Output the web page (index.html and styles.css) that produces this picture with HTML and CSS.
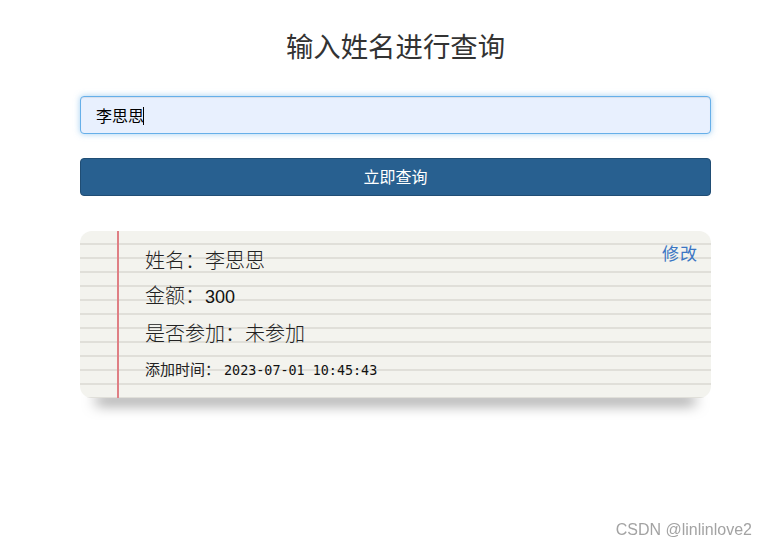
FILE: index.html
```html
<!DOCTYPE html>
<html lang="zh-CN">
<head>
<meta charset="utf-8">
<title>输入姓名进行查询</title>
<link rel="stylesheet" href="styles.css">
</head>
<body>
<main class="page">
  <h1 class="title">输入姓名进行查询</h1>
  <div class="input-wrap">
    <input class="name-input" type="text" value="李思思">
    <span class="caret"></span>
  </div>
  <button class="query-btn" type="button">立即查询</button>
  <section class="note">
    <div class="row row-first">
      <span class="field">姓名：<span class="value">李思思</span></span>
      <a class="edit" href="#">修改</a>
    </div>
    <div class="row"><span class="field">金额：<span class="value num">300</span></span></div>
    <div class="row"><span class="field">是否参加：<span class="value">未参加</span></span></div>
    <div class="row row-time"><span class="time-label">添加时间：</span><span class="time">2023-07-01 10:45:43</span></div>
  </section>
</main>
<div class="watermark">CSDN @linlinlove2</div>
</body>
</html>
```
FILE: styles.css
```css
html, body {
  margin: 0;
  padding: 0;
}
html {
  background: #fff;
}
body {
  font-family: "Noto Sans CJK SC", "Liberation Sans", sans-serif;
  color: #333;
  width: 767px;
  height: 547px;
  overflow: hidden;
}
.page {
  width: 631px;
  margin-left: 80px;
  padding-top: 25px;
  display: flex;
  flex-direction: column;
}
.title {
  margin: 0;
  font-size: 27.4px;
  line-height: 40px;
  font-weight: normal;
  text-align: center;
  color: #333;
}
.input-wrap {
  position: relative;
  margin-top: 31px;
}
.name-input {
  display: block;
  box-sizing: border-box;
  margin: 0;
  width: 631px;
  height: 38px;
  padding: 0 15px;
  border: 1px solid #66afe9;
  border-radius: 4px;
  background: #e8f0fe;
  box-shadow: inset 0 1px 1px rgba(0,0,0,.075), 0 0 6px rgba(102,175,233,.6);
  font-family: "Noto Sans CJK SC", sans-serif;
  font-size: 16px;
  color: #000;
  outline: none;
}
.caret {
  position: absolute;
  left: 63px;
  top: 11px;
  width: 1px;
  height: 18px;
  background: #000;
}
.query-btn {
  box-sizing: border-box;
  margin-top: 24px;
  width: 631px;
  height: 38px;
  border: 1px solid #204d74;
  border-radius: 4px;
  background: #286090;
  color: #fff;
  font-family: "Noto Sans CJK SC", sans-serif;
  font-size: 16px;
  line-height: 20px;
  padding: 0 0 3px;
}
.note {
  position: relative;
  box-sizing: border-box;
  margin-top: 35px;
  height: 167px;
  padding: 11px 13px 0 65px;
  border-radius: 12px;
  background-color: #f3f3ee;
  background-image:
    linear-gradient(to right, transparent 37.5px, #df7f84 37.5px, #df7f84 39px, transparent 39px),
    repeating-linear-gradient(to bottom, transparent 0, transparent 12px, #e0dfd9 12px, #e0dfd9 14px);
  color: #222;
}
.note::after {
  content: "";
  position: absolute;
  left: 16px;
  right: 16px;
  bottom: 4px;
  height: 8px;
  box-shadow: 0 10px 14px rgba(0,0,0,.5);
  z-index: -1;
}
.row {
  display: flex;
  align-items: flex-start;
  font-size: 20px;
  line-height: 35px;
  font-weight: 300;
}
.row-first {
  justify-content: space-between;
}
.value.num {
  font-family: "Liberation Sans", sans-serif;
  font-size: 18px;
  font-weight: normal;
  color: #111;
}
.edit {
  font-size: 17px;
  line-height: 22px;
  font-weight: normal;
  color: #3a76c4;
  text-decoration: none;
  letter-spacing: 1px;
}
.row-time {
  line-height: 38px;
  align-items: baseline;
}
.time-label {
  font-size: 15px;
  font-weight: normal;
  margin-right: 4px;
}
.time {
  font-family: "DejaVu Sans Mono", monospace;
  font-size: 13.4px;
  color: #111;
}
.watermark {
  position: fixed;
  right: 15px;
  bottom: 8px;
  font-family: "Liberation Sans", sans-serif;
  font-size: 16px;
  color: #a3a3a3;
}
```
